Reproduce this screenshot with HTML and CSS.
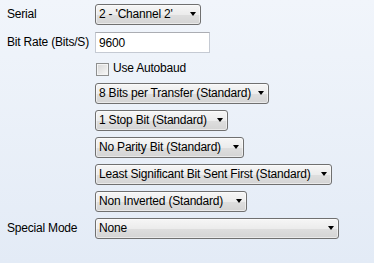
FILE: index.html
```html
<!DOCTYPE html>
<html lang="en">
<head>
    <meta charset="UTF-8">
    <meta name="viewport" content="width=device-width, initial-scale=1.0">
    <title>Serial Settings</title>
    <link rel="stylesheet" href="styles.css">
</head>
<body>
    <form class="settings">
        <label class="field-label" for="serial">Serial</label>
        <span class="combo w-serial">
            <select id="serial"><option>2 - 'Channel 2'</option></select>
        </span>

        <label class="field-label" for="bitrate">Bit Rate (Bits/S)</label>
        <input class="text-box" type="text" id="bitrate" value="9600">

        <label class="check-row">
            <input type="checkbox" id="autobaud">
            <span>Use Autobaud</span>
        </label>

        <span class="combo w-bits">
            <select id="bits"><option>8 Bits per Transfer (Standard)</option></select>
        </span>

        <span class="combo w-stop">
            <select id="stop"><option>1 Stop Bit (Standard)</option></select>
        </span>

        <span class="combo w-parity">
            <select id="parity"><option>No Parity Bit (Standard)</option></select>
        </span>

        <span class="combo w-order">
            <select id="order"><option>Least Significant Bit Sent First (Standard)</option></select>
        </span>

        <span class="combo w-invert">
            <select id="invert"><option>Non Inverted (Standard)</option></select>
        </span>

        <label class="field-label" for="mode">Special Mode</label>
        <span class="combo w-mode">
            <select id="mode"><option>None</option></select>
        </span>
    </form>
</body>
</html>
```

FILE: styles.css
```css
html {
    min-height: 100%;
    background: linear-gradient(#f1f5fb, #e3ebf6);
}
body {
    font-family: "Liberation Sans", Arial, sans-serif;
    font-size: 12px;
    letter-spacing: -0.2px;
    color: #000;
    margin: 0;
    padding: 4px 0 0 7px;
}
.settings {
    display: grid;
    grid-template-columns: 88px 1fr;
    grid-template-rows: 22px 21px 18px 21px 21px 21px 21px 21px 21px;
    row-gap: 6px;
}
.field-label {
    grid-column: 1;
    align-self: start;
    line-height: 21px;
}
.combo,
.text-box,
.check-row {
    grid-column: 2;
}
.combo {
    position: relative;
    display: block;
    height: 21px;
}
.combo select {
    appearance: none;
    -webkit-appearance: none;
    display: block;
    width: 100%;
    height: 21px;
    box-sizing: border-box;
    margin: 0;
    padding: 0 0 1px 3px;
    font: inherit;
    letter-spacing: inherit;
    color: #000;
    border: 1px solid #707070;
    border-radius: 3px;
    background: linear-gradient(#f6f6f6, #ececec 50%, #dedede 52%, #d4d4d4);
    box-shadow: inset 0 0 0 1px rgba(255, 255, 255, 0.5);
    outline: none;
}
.combo::after {
    content: "";
    position: absolute;
    right: 5px;
    top: 8px;
    border-left: 3.5px solid transparent;
    border-right: 3.5px solid transparent;
    border-top: 4px solid #000;
    pointer-events: none;
}
.w-serial { width: 106px; }
.w-bits { width: 174px; }
.w-stop { width: 133px; }
.w-parity { width: 149px; }
.w-order { width: 237px; }
.w-invert { width: 152px; }
.w-mode { width: 244px; }
.text-box {
    width: 115px;
    height: 21px;
    box-sizing: border-box;
    margin: 0;
    padding: 0 0 0 3px;
    font: inherit;
    letter-spacing: inherit;
    color: #000;
    border: 1px solid #c5cad3;
    border-top-color: #abadb3;
    background: #fff;
    outline: none;
}
.check-row {
    display: flex;
    align-items: center;
    gap: 4px;
    padding-left: 1px;
}
.check-row input {
    appearance: none;
    -webkit-appearance: none;
    width: 13px;
    height: 13px;
    margin: 2px 0 0 0;
    box-sizing: border-box;
    border: 1px solid #8e8f8f;
    background: linear-gradient(135deg, #d6d6d6, #f8f8f8);
    box-shadow: inset 0 0 0 1px #f4f4f4;
}
```
